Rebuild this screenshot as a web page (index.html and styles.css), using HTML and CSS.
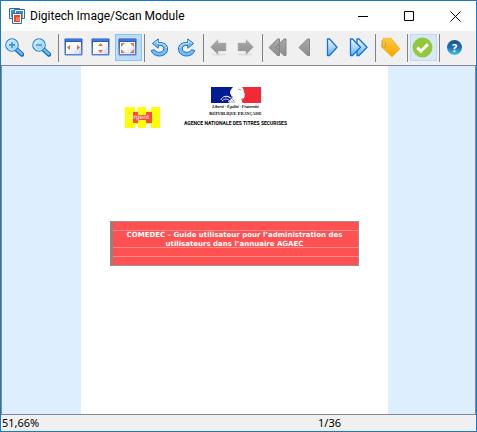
FILE: index.html
```html
<!DOCTYPE html>
<html lang="fr">
<head>
<meta charset="utf-8">
<title>Digitech Image/Scan Module</title>
<link rel="stylesheet" href="styles.css">
</head>
<body>
<svg class="defs" aria-hidden="true">
  <defs>
    <linearGradient id="blue" x1="0" y1="0" x2="0" y2="1"><stop offset="0" stop-color="#f2faff"/><stop offset="1" stop-color="#62b5f5"/></linearGradient>
    <linearGradient id="glass" x1="0" y1="0" x2="1" y2="1"><stop offset="0" stop-color="#e2f5ff"/><stop offset="1" stop-color="#85c9f7"/></linearGradient>
    <linearGradient id="grey" x1="0" y1="0" x2="0" y2="1"><stop offset="0" stop-color="#a9a9a9"/><stop offset="1" stop-color="#8e8e8e"/></linearGradient>
    <linearGradient id="frame" x1="0" y1="0" x2="0" y2="1"><stop offset="0" stop-color="#1b55b8"/><stop offset="1" stop-color="#5b85dd"/></linearGradient>
    <linearGradient id="pane" x1="0" y1="0" x2="1" y2="1"><stop offset="0.4" stop-color="#fff"/><stop offset="1" stop-color="#cfd6e4"/></linearGradient>
    <linearGradient id="gold" x1="0" y1="0" x2="0" y2="1"><stop offset="0" stop-color="#ffc83a"/><stop offset="1" stop-color="#f7a800"/></linearGradient>
    <g id="lens">
      <path d="M11.500 11.500l5.500 5" stroke="#1e66b5" stroke-width="4.400" stroke-linecap="round"/>
      <path d="M12 11.700l4.800 4.300" stroke="#6db9f2" stroke-width="2.400" stroke-linecap="round"/>
      <circle cx="7" cy="7" r="6.200" fill="url(#glass)" stroke="#2f86d8" stroke-width="1.300"/>
      <circle cx="7" cy="7" r="5.100" fill="none" stroke="#c9eaff"/>
    </g>
    <g id="window">
      <rect x="0.500" y="0.500" width="18" height="17" rx="1" fill="url(#frame)"/>
      <path d="M1.500 2h16" stroke="#5f97e6"/>
      <rect x="2" y="4" width="15" height="12" fill="url(#pane)"/>
    </g>
    <g id="rotate">
      <path d="M8.200 4.600V.9L2.400 5.500l5.800 4.700V7.400c3.700-.5 5.600 1.200 5.500 3.400-.2 2.500-2.300 3.500-4.500 3.500-2.500 0-4-1.100-4.700-2.600l-3.300.8c.9 3.200 4 5.500 8 5.500 4.800 0 8.400-2.800 8.400-7 0-4.300-3.600-7-9.400-6.400z" fill="#74bdf4" stroke="#1c72c8" stroke-linejoin="round"/>
      <path d="M4 5.500l3.500-2.600v2.700h3c3.500.2 5.600 2 5.800 4.500" fill="none" stroke="#c3e7ff"/>
    </g>
  </defs>
</svg>
<main class="window">
  <header class="titlebar">
    <svg class="app-icon" width="16" height="16" viewBox="0 0 16 16" aria-hidden="true">
      <path d="M.5.500h10v10H.5z" fill="#e6f2fc" stroke="#2b6ca8"/><path d="M2 2h7v7H2z" fill="#3c98e2"/>
      <path d="M5.500 1.500h10v9h-10z" fill="#edf6ff" stroke="#2b6ca8"/><path d="M7 3h7v7H7z" fill="#70b83c"/><path d="M7 3h7v2H7z" fill="#3c83d0"/>
      <path d="M3.500 5.500h9v10h-9z" fill="#fff" stroke="#2b6ca8"/><path d="M5 7h6v7H5z" fill="#e94726"/><path d="M7 9h4v4H7z" fill="#ff7950"/>
    </svg>
    <h1 class="title">Digitech Image/Scan Module</h1>
    <div class="controls">
      <button class="control" aria-label="Réduire"><svg width="11" height="11"><path d="M0 5.500h10" stroke="#000"/></svg></button>
      <button class="control" aria-label="Agrandir"><svg width="11" height="11"><path d="M.5.500h9v9h-9z" fill="none" stroke="#000"/></svg></button>
      <button class="control" aria-label="Fermer"><svg width="11" height="11"><path d="M.5.500l10 10M10.500.500l-10 10" stroke="#000"/></svg></button>
    </div>
  </header>
  <nav class="toolbar" aria-label="Outils">
    <div class="group">
      <button class="tool" aria-label="Zoom avant"><svg width="19" height="19"><use href="#lens"/><path d="M4 7h6M7 4v6" stroke="#2f86d8" stroke-width="1.300"/></svg></button>
      <button class="tool" aria-label="Zoom arrière"><svg width="19" height="19"><use href="#lens"/><path d="M4 7h6" stroke="#2f86d8" stroke-width="1.300"/></svg></button>
    </div>
    <div class="group">
      <button class="tool" aria-label="Ajuster à la largeur"><svg width="19" height="19"><use href="#window"/><path d="M6 7v5l-3-2.500zM13 7v5l3-2.500z" fill="#e06b45"/></svg></button>
      <button class="tool" aria-label="Ajuster à la hauteur"><svg width="19" height="19"><use href="#window"/><path d="M7 8l2.500-3L12 8zM7 12l2.500 3 2.500-3z" fill="#e06b45"/></svg></button>
      <button class="tool tool-selected" aria-label="Page entière" aria-pressed="true"><svg width="19" height="19"><use href="#window"/><path d="M3 5h4L3 9zM16 5h-4l4 4zM3 15h4l-4-4zM16 15h-4l4-4z" fill="#e3734b"/></svg></button>
    </div>
    <div class="group">
      <button class="tool" aria-label="Rotation à gauche"><svg width="19" height="19"><use href="#rotate"/></svg></button>
      <button class="tool" aria-label="Rotation à droite"><svg width="19" height="19"><g transform="matrix(-1 0 0 1 19 0)"><use href="#rotate"/></g></svg></button>
    </div>
    <div class="group">
      <button class="tool" aria-label="Retour"><svg width="19" height="19"><ellipse cx="10" cy="16.500" rx="8" ry="1" fill="#dedede"/><path d="M1.500 9L9 1.500V5h8v8H9v3.500z" fill="url(#grey)" stroke="#b4b4b4" stroke-width="0.500"/></svg></button>
      <button class="tool" aria-label="Avancer"><svg width="19" height="19"><ellipse cx="9" cy="16.500" rx="8" ry="1" fill="#dedede"/><path d="M17.500 9L10 1.500V5H2v8h8v3.500z" fill="url(#grey)" stroke="#b4b4b4" stroke-width="0.500"/></svg></button>
    </div>
    <div class="group">
      <button class="tool" aria-label="Première page"><svg width="19" height="19" fill="url(#grey)" stroke="#858585" stroke-linejoin="round"><path d="M9.500 1h2v16.500h-2L1 9.500zM16 1h2v16.500h-2L7.500 9.500z"/></svg></button>
      <button class="tool" aria-label="Page précédente"><svg width="19" height="19" fill="url(#grey)" stroke="#858585" stroke-linejoin="round"><path d="M12.500 1h2v16.500h-2L4 9.500z"/></svg></button>
      <button class="tool" aria-label="Page suivante"><svg width="19" height="19" fill="url(#blue)" stroke="#1972d2" stroke-width="1.300" stroke-linejoin="round"><path d="M5.500 1h2l7.500 8.300-7.500 8.200h-2z"/></svg></button>
      <button class="tool" aria-label="Dernière page"><svg width="19" height="19" fill="url(#blue)" stroke="#1972d2" stroke-width="1.300" stroke-linejoin="round"><path d="M8 1h2l8 8.300-8 8.200H8z"/><path d="M1.500 1h2l8 8.300-8 8.200h-2z"/></svg></button>
    </div>
    <div class="group">
      <button class="tool" aria-label="Étiquette"><svg width="21" height="21"><path d="M3 1.500l8-.5 9 11-8 8L1.500 10z" fill="url(#gold)" stroke="#eaa414" stroke-width="0.500" stroke-linejoin="round"/><path d="M2 3v6c0 2 3.500 2 3.500 0V5" fill="none" stroke="#b89a5c" stroke-width="0.800"/></svg></button>
    </div>
    <div class="group">
      <button class="tool tool-active" aria-label="Valider"><svg width="21" height="21"><circle cx="10.500" cy="10.500" r="10" fill="#93c83d"/><path d="M5.200 10.700l3.700 3.500 7-7" fill="none" stroke="#fff" stroke-width="3"/></svg></button>
    </div>
    <div class="group">
      <button class="tool" aria-label="Aide"><span class="help-mark">?</span></button>
    </div>
  </nav>
  <section class="viewer" aria-label="Document">
    <article class="page">
      <div class="letterhead">
        <div class="stamp">
          <svg class="stamp-shape" width="35" height="21" viewBox="0 0 35 21" aria-hidden="true"><path d="M0 0h10v4h3V0h8v4h5V0h9v21h-9v-4h-5v4h-8v-4h-3v4H0z" fill="#ff0"/><path d="M8 5h5v3h8V5h6v11h-6v-3h-8v3H8z" fill="#ff4744"/></svg>
          <span class="stamp-text">Urgent</span>
        </div>
        <div class="republic">
          <svg class="flag" width="50" height="16" viewBox="0 0 50 16" aria-hidden="true">
            <path d="M0 0h22c-2 2-3 4-3 6l2 4-3 6H0z" fill="#051b91"/>
            <path d="M31 0h19v16H32c-2-2-1-4 1-5 1-1 0-2 1-3l-1-3c0-2-1-4-2-5z" fill="#f32935"/>
            <path d="M10 13c1-4 7-5 9-2m-8 3c3-3 6-2 8 0m-5-4c3-1 6 0 7 3m-4 2l5-4" fill="none" stroke="#dfe3f5"/>
            <path d="M20 11l3 3m-2-5l1 2m-2 4h4m3-13l3 1m2 8l-2 2" stroke="#777" stroke-width="0.700"/>
          </svg>
          <span class="motto">Liberté · Égalité · Fraternité</span>
          <span class="nation">République Française</span>
          <span class="agency">AGENCE NATIONALE DES TITRES SECURISES</span>
        </div>
      </div>
      <div class="banner"><h2 class="banner-text">COMEDEC – Guide utilisateur pour l’administration des utilisateurs dans l’annuaire AGAEC</h2></div>
    </article>
  </section>
  <footer class="status"><span>51,66%</span><span>1/36</span></footer>
</main>
</body>
</html>
```
FILE: styles.css
```css
* { box-sizing: border-box; }
body { margin: 0; font-family: "Noto Sans", "Liberation Sans", sans-serif; color: #000; }
h1, h2 { margin: 0; font-weight: normal; }
button { padding: 0; border: 0; background: none; font: inherit; }
svg { display: block; }
.defs { position: absolute; width: 0; height: 0; }

.window {
  display: flex;
  flex-direction: column;
  min-height: 100vh;
  border: 1px solid #1979ca;
  background: #f0f0f0;
}

.titlebar { display: flex; align-items: center; height: 30px; padding-left: 8px; background: #fff; }
.app-icon { flex: none; }
.title { flex: 1; padding-left: 5px; font: 12px/16px Roboto, sans-serif; white-space: nowrap; }
.controls { display: flex; }
.control { display: flex; align-items: center; justify-content: center; width: 46px; height: 30px; padding-left: 4px; }

.toolbar { display: flex; padding: 3px 1px; }
.group { display: flex; height: 28px; }
.group + .group { margin-left: 2px; padding-left: 2px; border-left: 1px solid #808080; }
.tool { display: flex; align-items: center; justify-content: center; width: 27px; height: 27px; padding-right: 2px; }
.tool-selected { border: 1px solid #8fc3ec; background: #bcdcf4; }
.tool-active { border: 1px solid #b9dbf5; background: #d8e8f4; }
.help-mark {
  width: 15px;
  height: 15px;
  border-radius: 50%;
  background: linear-gradient(#1a4f86, #1e70ae 50%, #45c8ee);
  color: #fff;
  font-size: 11px;
  font-weight: bold;
  line-height: 15px;
}

.viewer {
  flex: 1;
  display: grid;
  grid-template-columns: 79fr 307fr 87fr;
  border: 1px solid #828790;
  background: #ddeeff;
}
.page { grid-column: 2; padding: 21px 29px; background: #fff; }

.letterhead { display: flex; align-items: flex-start; gap: 24px; padding-left: 15px; }
.stamp { display: grid; flex: none; margin-top: 20px; }
.stamp-shape, .stamp-text { grid-area: 1 / 1; }
.stamp-text { padding-left: 4px; color: #fff; font: 6px/19px "DejaVu Sans", sans-serif; }
.republic { display: flex; flex-direction: column; align-items: center; white-space: nowrap; }
.motto { font: italic bold 4px/7px "Liberation Serif", serif; }
.nation { font: bold small-caps 5px/7px "Liberation Serif", serif; }
.agency { padding-top: 3px; font: bold 5px/7px Roboto, sans-serif; }

.banner {
  margin-top: 93px;
  height: 45px;
  padding: 9px 4px 0 2px;
  border: 1px solid #a09090;
  border-left: 3px solid #98807c;
  background:
    linear-gradient(#ff8c8a, #ff8c8a) 0 8px / 100% 1px no-repeat,
    linear-gradient(#ff8c8a, #ff8c8a) 0 25px / 100% 1px no-repeat,
    linear-gradient(#ff8c8a, #ff8c8a) 0 34px / 100% 1px no-repeat,
    #ff5151;
}
.banner-text { color: #fff; font: bold 7px/9px "DejaVu Sans", sans-serif; text-align: center; }

.status {
  display: grid;
  grid-template-columns: 2fr 1fr;
  height: 16px;
  padding-left: 1px;
  font-size: 11px;
  line-height: 16px;
}
```
